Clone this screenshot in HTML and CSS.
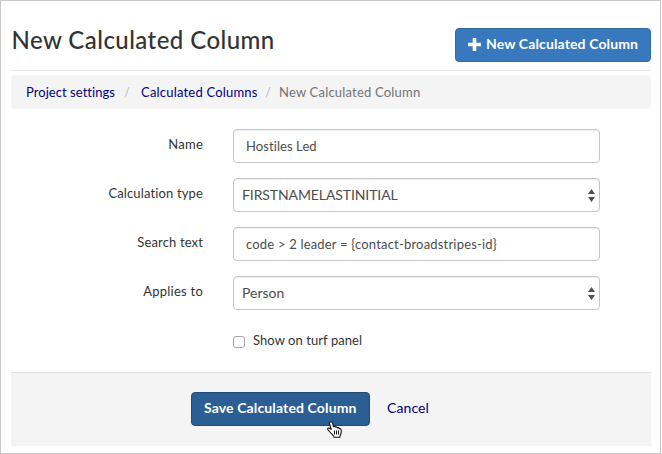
FILE: index.html
```html
<!DOCTYPE html>
<html lang="en">
<head>
<meta charset="utf-8">
<title>New Calculated Column</title>
<link rel="stylesheet" href="styles.css">
</head>
<body>
<main class="page">
  <header class="header">
    <h1 class="title">New Calculated Column</h1>
    <a class="btn btn-new"><svg class="plus" viewBox="0 0 13 13"><path d="M4.7 0h3.6v4.700H13v3.600H8.300V13H4.700V8.300H0V4.700h4.700z"/></svg><span>New Calculated Column</span></a>
  </header>
  <nav class="crumbs">
    <a class="c1">Project settings</a><i class="s1">/</i><a class="c2">Calculated Columns</a><i class="s2">/</i><span class="c3">New Calculated Column</span>
  </nav>
  <form class="form">
    <div class="row"><label><span class="l1">Name</span></label><div class="field text"><span class="v1">Hostiles Led</span></div></div>
    <div class="row"><label><span class="l2">Calculation type</span></label><div class="field select"><span class="v2">FIRSTNAMELASTINITIAL</span><svg class="arrows" viewBox="0 0 7 13"><path d="M3.5 0L7 5H0zM3.5 13L0 8h7z"/></svg></div></div>
    <div class="row"><label><span class="l3">Search text</span></label><div class="field text"><span class="v3">code &gt; 2 leader = {contact-broadstripes-id}</span></div></div>
    <div class="row"><label><span class="l4">Applies to</span></label><div class="field select"><span class="v4">Person</span><svg class="arrows" viewBox="0 0 7 13"><path d="M3.5 0L7 5H0zM3.5 13L0 8h7z"/></svg></div></div>
    <div class="check"><span class="box"></span><span class="l5">Show on turf panel</span></div>
  </form>
  <footer class="actions">
    <a class="btn btn-save"><span>Save Calculated Column</span></a><a class="cancel">Cancel</a>
    <svg class="cursor" viewBox="0 0 16 17"><path d="M3.200 1c1.100-.6 2 0 2.300 1l1 3.600c.8-.4 1.600-.2 2 .5.8-.4 1.700-.1 2 .7.9-.3 1.700.1 2 .8.9-.1 1.500.4 1.700 1.200.4 2-.2 3.900-.9 5.400l-.5 2H7.200c-.8-1.900-2.600-3-4.300-5.200L.9 8.700c-.6-1 .1-1.900 1.200-1.700.9.200 1.500.9 2.300 1.700L2.400 2.800C2.200 2 2.500 1.300 3.200 1z"/><path class="lines" d="M7.500 9.500v4M9.500 9.500v4M11.500 9.500v4"/></svg>
  </footer>
</main>
</body>
</html>
```
FILE: styles.css
```css
* { box-sizing: border-box; }
body { margin: 0; background: #fff; font: 14px/20px Lato, "Liberation Sans", sans-serif; font-variant-ligatures: none; color: #333; }
.page { width: 661px; height: 454px; border: 1px solid #c8c8c8; padding: 0 9px 0 10px; overflow: hidden; }
.header { height: 70px; border-bottom: 1px solid #eaeaea; display: flex; justify-content: space-between; align-items: flex-start; padding-top: 27px; }
.title { margin: -3px 0 0 .5px; font-size: 24px; line-height: 30px; font-weight: 500; letter-spacing: .44px; white-space: nowrap; }
.btn { height: 34px; border: 1px solid #2e6da4; border-radius: 4px; background: #3879bd; color: #fff; font-weight: 700; display: flex; align-items: center; white-space: nowrap; letter-spacing: .13px; }
.btn-new { width: 196px; padding: 0 0 2px 12px; }
.plus { width: 13px; height: 13px; fill: #fff; margin-right: 5px; }
.crumbs { height: 34px; margin-top: 4px; border-radius: 4px; background: #f4f4f4; padding: 0 15px; display: flex; align-items: center; white-space: nowrap; font-size: 13px; }
.crumbs a, .cancel { color: #000080; }
.crumbs i { font-style: normal; color: #bbb; width: 5px; text-align: center; }
.c1 { width: 98px; letter-spacing: .05px; }
.c2 { width: 124px; letter-spacing: .2px; }
.s1 { margin-right: 12px; }
.s2 { margin-right: 9px; }
.c3 { color: #737373; letter-spacing: .2px; }
.form { padding-top: 20px; height: 263px; }
.row { display: flex; height: 34px; margin-bottom: 15px; }
label { width: 192px; text-align: right; padding-top: 5px; margin-right: 30px; font-size: 13px; letter-spacing: .14px; }
.l1, .l4 { letter-spacing: .25px; }
.field { width: 367px; border: 1px solid #c6c6c6; border-radius: 4px; box-shadow: inset 0 1px 1px rgba(0,0,0,.07); display: flex; align-items: center; color: #4d4d4d; white-space: nowrap; }
.text { padding: 0 12px; font-size: 13px; }
.v1 { letter-spacing: .08px; }
.v2 { letter-spacing: -.1px; }
.v3 { letter-spacing: .19px; }
.select { padding: 0 4px 1px 8px; justify-content: space-between; }
.arrows { width: 7px; height: 13px; fill: #505050; margin-top: 2px; }
.check { display: flex; margin: 20px 0 0 222px; align-items: center; font-size: 13px; letter-spacing: .07px; }
.box { width: 12px; height: 12px; border: 1px solid #a6a6a6; border-radius: 3px; margin: 3px 8px 0 0; background: #fff; }
.actions { position: relative; height: 74px; border-top: 1px solid #e2e2e2; background: #f4f4f4; display: flex; padding: 19px 0 0 180px; }
.btn-save { width: 179px; background: #2b5f94; border-color: #204d74; padding: 0 0 2px 12px; }
.cancel { margin: 6px 0 0 17px; letter-spacing: .1px; }
.cursor { position: absolute; left: 316px; top: 48px; width: 16px; height: 17px; fill: #fff; stroke: #111; stroke-width: 1.1; }
.lines { fill: none; stroke-width: 1; }
```
